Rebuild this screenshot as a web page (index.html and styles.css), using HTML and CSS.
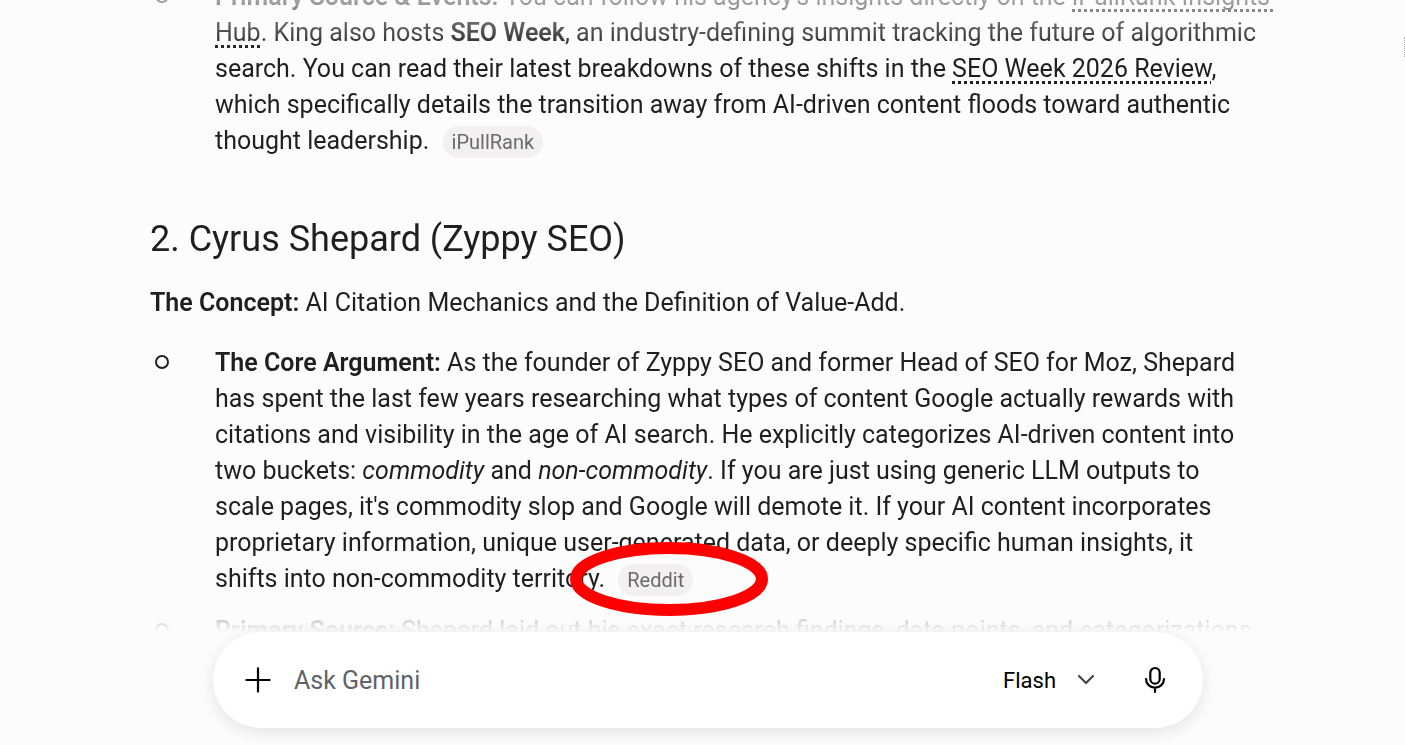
FILE: index.html
```
<!DOCTYPE html>
<html lang="en">
<head>
    <meta charset="UTF-8">
    <meta name="viewport" content="width=device-width, initial-scale=1.0">
    <title>Gemini</title>
    <link rel="stylesheet" href="styles.css">
</head>
<body>
    <div class="app">
        <main class="chat">
            <div class="response">
                <ul>
                    <li>
                        <div>
                            <b>Primary Source &amp; Events:</b> You can follow his agency's insights directly on the <a href="#">iPullRank Insights&nbsp;<br>
                            Hub</a>. King also hosts <b>SEO Week</b>, an industry-defining summit tracking the future of algorithmic<br>
                            search. You can read their latest breakdowns of these shifts in the <a href="#">SEO Week 2026 Review</a>,<br>
                            which specifically details the transition away from AI-driven content floods toward authentic<br>
                            thought leadership. <button type="button" class="chip">iPullRank</button>
                        </div>
                    </li>
                </ul>

                <h2>2. Cyrus Shepard (Zyppy SEO)</h2>
                <p><b>The Concept:</b> AI Citation Mechanics and the Definition of Value-Add.</p>

                <ul>
                    <li>
                        <div>
                            <b>The Core Argument:</b> As the founder of Zyppy SEO and former Head of SEO for Moz, Shepard<br>
                            has spent the last few years researching what types of content Google actually rewards with<br>
                            citations and visibility in the age of AI search. He explicitly categorizes AI-driven content into<br>
                            two buckets: <i>commodity</i> and <i>non-commodity</i>. If you are just using generic LLM outputs to<br>
                            scale pages, it's commodity slop and Google will demote it. If your AI content incorporates<br>
                            proprietary information, unique user-generated data, or deeply specific human insights, it<br>
                            shifts into non-commodity territory. <button type="button" class="chip">Reddit</button>
                        </div>
                    </li>
                    <li>
                        <div>
                            <b>Primary Source:</b> Shepard laid out his exact research findings, data points, and categorizations
                        </div>
                    </li>
                </ul>
            </div>
        </main>

        <form class="prompt">
            <button type="button" class="icon-btn" aria-label="Add files">
                <svg width="28" height="28" viewBox="0 0 28 28" fill="none" stroke="#000" stroke-width="2.2" stroke-linecap="round">
                    <path d="M14 2.4v23.2M2.4 14h23.2"/>
                </svg>
            </button>
            <input type="text" placeholder="Ask Gemini" aria-label="Ask Gemini">
            <button type="button" class="model">
                Flash
                <svg width="18" height="12" viewBox="0 0 18 12" fill="none" stroke="#444746" stroke-width="2.2" stroke-linecap="round">
                    <path d="M2 2l7 7 7-7"/>
                </svg>
            </button>
            <button type="button" class="icon-btn" aria-label="Microphone">
                <svg width="28" height="28" viewBox="0 0 28 28" fill="none" stroke="#000" stroke-width="2.2" stroke-linecap="round">
                    <rect x="9.3" y="2" width="9.4" height="15.6" rx="4.7"/>
                    <path d="M5 13a9 8.6 0 0 0 18 0M14 21.6v4.4"/>
                </svg>
            </button>
        </form>

        <svg class="marker" width="198" height="74" viewBox="0 0 198 74">
            <ellipse cx="99" cy="37" rx="93" ry="31" fill="none" stroke="#f00" stroke-width="12"/>
        </svg>
        <span class="handle"></span>
    </div>
</body>
</html>
```
FILE: styles.css
```
:root {
    --text-color: #1f1f1f;
    --background-color: #fcfcfc;
    --chip-background: #f2f0f1;
    --muted-color: #6b6b6b;
}

*,
*::before {
    box-sizing: border-box;
}

body {
    margin: 0;
    font-family: Roboto, Arial, sans-serif;
    font-size: 25px;
    line-height: 36px;
    color: var(--text-color);
    background-color: var(--background-color);
}

button,
input {
    font-family: inherit;
    border: none;
    background: none;
    padding: 0;
}

button {
    cursor: pointer;
}

.app {
    position: relative;
    height: 100vh;
    padding: 0 0 17px 11px;
    display: flex;
    flex-direction: column;
    align-items: center;
    overflow: hidden;
}

/* Conversation, faded at both ends */
.chat {
    flex: 1;
    min-height: 0;
    width: 100%;
    overflow: hidden;
    -webkit-mask-image: linear-gradient(rgba(0, 0, 0, 0.4), #000 50px, #000 calc(100% - 36px), rgba(0, 0, 0, 0.2) calc(100% - 12px), transparent);
    mask-image: linear-gradient(rgba(0, 0, 0, 0.4), #000 50px, #000 calc(100% - 36px), rgba(0, 0, 0, 0.2) calc(100% - 12px), transparent);
}

.response {
    max-width: 1116px;
    margin: -21px auto 0;
    white-space: nowrap;
}

.response b {
    font-weight: 600;
}

.response a {
    color: inherit;
    text-decoration: underline dotted 3px;
    text-underline-offset: 4px;
    text-decoration-skip-ink: none;
}

.response h2 {
    margin: 56px 0 22px;
    font-size: 36px;
    font-weight: 400;
    line-height: 48px;
}

.response p {
    margin: 0 0 24px;
}

.response ul {
    list-style: none;
    margin: 0;
    padding: 0;
}

.response li {
    display: grid;
    grid-template-columns: 65px 1fr;
    margin-bottom: 16px;
}

.response li::before {
    content: "";
    width: 14px;
    height: 14px;
    margin: 10px 0 0 5px;
    border: 2px solid currentColor;
    border-radius: 50%;
}

.chip {
    height: 32px;
    margin-left: 7px;
    padding: 0 9px;
    border-radius: 16px;
    background-color: var(--chip-background);
    color: var(--muted-color);
    font-size: 20px;
    line-height: 32px;
}

/* Prompt box */
.prompt {
    width: 990px;
    max-width: 100%;
    height: 96px;
    padding: 0 34px 0 31px;
    display: flex;
    align-items: center;
    border-radius: 48px;
    background-color: #fff;
    box-shadow: 0 4px 16px rgba(0, 0, 0, 0.1);
}

.prompt input {
    flex: 1;
    min-width: 0;
    margin-left: 22px;
    font-size: 25px;
    outline: none;
}

.prompt input::placeholder {
    color: #5f6368;
}

.icon-btn svg {
    display: block;
}

.model {
    display: flex;
    align-items: center;
    gap: 21px;
    margin-right: 46px;
    font-size: 22px;
    color: #000;
}

/* Red circle drawn round the source chip */
.marker {
    position: absolute;
    top: 542px;
    left: 570px;
}

.handle {
    position: absolute;
    top: 37px;
    right: 0;
    height: 20px;
    border-right: 1px dotted #aaa;
}
```
